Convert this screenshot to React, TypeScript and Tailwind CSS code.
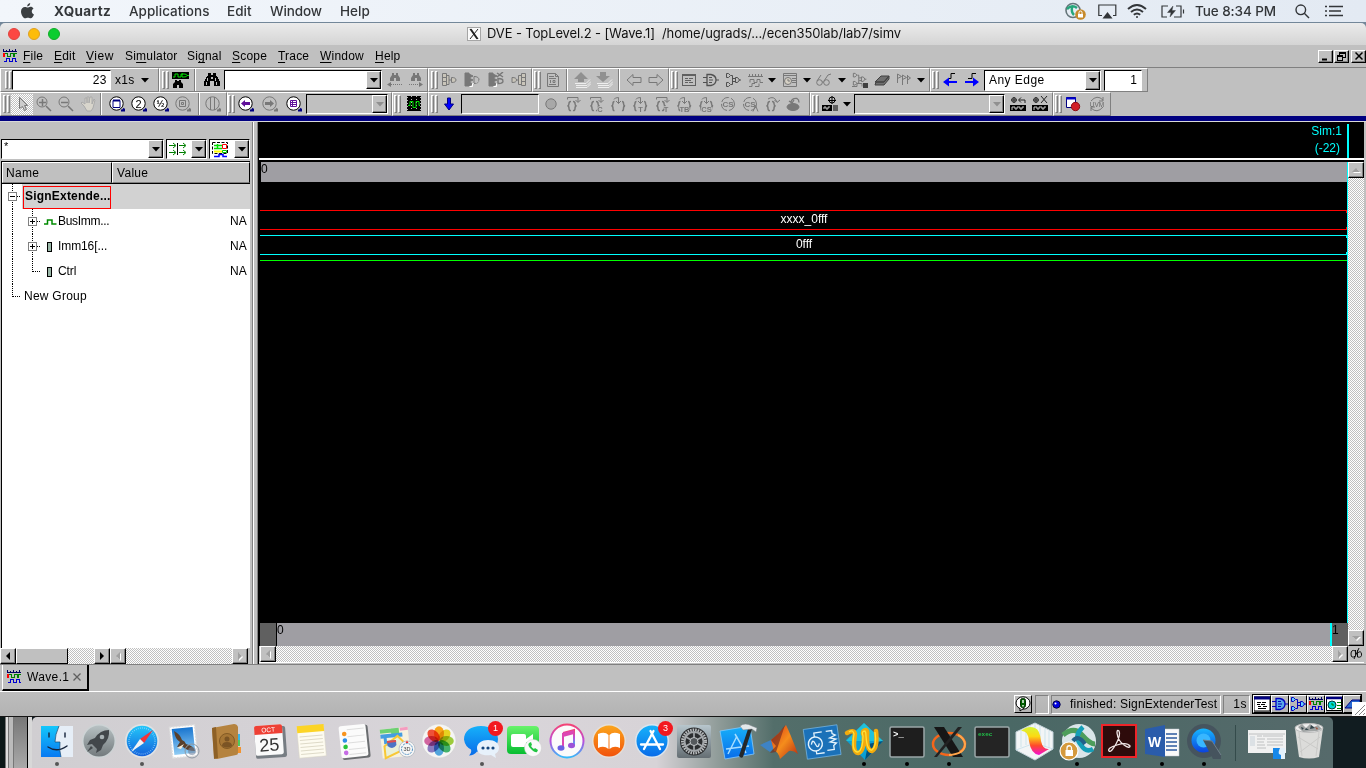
import React from "react";

type Kids = { children?: React.ReactNode; className?: string };

/* ---------- shared pieces ---------- */

const G = "#787878";

function Ico({ children, w = 16, h = 16, c = G, className = "" }: Kids & { w?: number; h?: number; c?: string }) {
  return (
    <svg width={w} height={h} viewBox={`0 0 ${w} ${h}`} fill="none" stroke={c} className={`shrink-0 ${className}`}>
      {children}
    </svg>
  );
}

function Handle({ className = "" }: Kids) {
  return (
    <div className={`flex h-[18px] w-[7px] shrink-0 gap-px ${className}`}>
      <div className="w-[3px] border border-t-white border-r-[#808080] border-b-[#808080] border-l-white" />
      <div className="w-[3px] border border-t-white border-r-[#808080] border-b-[#808080] border-l-white" />
    </div>
  );
}

function Group({ children, className = "" }: Kids) {
  return (
    <div className={`flex h-6 shrink-0 items-center border border-t-white border-r-[#808080] border-b-[#808080] border-l-white ${className}`}>
      {children}
    </div>
  );
}

function Cell({ children, className = "" }: Kids) {
  return <div className={`flex shrink-0 items-center justify-center ${className}`}>{children}</div>;
}

function Sep() {
  return <div className="h-[22px] w-0.5 shrink-0 border-r border-l border-r-white border-l-[#808080]" />;
}

function Tri({ c = "#000" }: { c?: string }) {
  return (
    <svg width="8" height="5" viewBox="0 0 8 5" className="shrink-0">
      <path d="M0 0h8L4 4.500z" fill={c} />
    </svg>
  );
}

function DropBtn({ off = false }: { off?: boolean }) {
  return (
    <div className="flex h-full w-[15px] shrink-0 items-center justify-center border border-t-white border-r-black border-b-black border-l-white bg-[#c0c0c0] shadow-[inset_-1px_-1px_#808080]">
      <Tri c={off ? "#909090" : "#000"} />
    </div>
  );
}

function Field({ children, className = "" }: Kids) {
  return (
    <div className={`flex shrink-0 items-center border-t-[1.5px] border-r border-b border-l-[1.5px] border-t-black border-r-white border-b-white border-l-black ${className}`}>
      {children}
    </div>
  );
}

const DITHER = "[background-image:repeating-conic-gradient(#fff_0_25%,#c0c0c0_0_50%)] [background-size:2px_2px]";

function ScrollBtn({ dir, off = true }: { dir: "l" | "r" | "u" | "d"; off?: boolean }) {
  const d = { l: "M10 4v8L6 8z", r: "M6 4v8l4-4z", u: "M4 10h8L8 6z", d: "M4 6h8l-4 4z" }[dir];
  return (
    <div className="h-4 w-4 shrink-0 border border-t-white border-r-black border-b-black border-l-white bg-[#c0c0c0] shadow-[inset_-1px_-1px_#808080]">
      <svg width="14" height="14" viewBox="1 1 14 14">
        {off && <path d={d} fill="#fff" transform="translate(1 1)" />}
        <path d={d} fill={off ? "#a0a0a0" : "#000"} />
      </svg>
    </div>
  );
}

/* ---------- small toolbar drawings ---------- */

function Lens({ children, off = false }: { children?: React.ReactNode; off?: boolean }) {
  return (
    <Ico c={off ? G : "#000"}>
      <circle cx="7.500" cy="7.500" r="6.700" fill={off ? "none" : "#fff"} />
      <path d="M12 14.500h4M14 12.500l2 2" stroke={off ? G : "#000080"} strokeWidth="2" />
      {children}
    </Ico>
  );
}

function Bino({ c = "#000" }: { c?: string }) {
  return (
    <g fill={c} stroke="none" shapeRendering="crispEdges">
      <path d="M4 1h3v2h2V1h3v3h1l3 6v4h-6v-5H6v5H0v-4l3-6h1z" />
      <path d="M3 6h1v3H3zM11 6h1v3h-1zM2 10h1v3H2zM12 10h1v3h-1zM7 5h2v2H7z" fill="#c0c0c0" />
    </g>
  );
}

function SmallBino({ right = false }: { right?: boolean }) {
  return (
    <Ico>
      <path d="M5 1h2v2h2V1h2v2l2 3v3H9V6H7v3H3V6l2-3z" fill={G} stroke="none" />
      {right ? <path d="M1 12.500h11" strokeDasharray="1 1" /> : <path d="M4 12.500h11" strokeDasharray="1 1" />}
      <path d={right ? "M11 10v5l4-2.500z" : "M4 10v5l-4-2.500z"} fill={G} stroke="none" />
    </Ico>
  );
}

function WaveIcon() {
  return (
    <svg width="14" height="14" viewBox="0 0 14 14" fill="none" shapeRendering="crispEdges" className="shrink-0">
      <path d="M0 2.500h14M.5 0v2M3.500 1v2M6.500 0v2M9.500 1v2M12.500 0v2" stroke="#000060" />
      <path d="M2 4.500h2.500v3h3v-3h3v3h1v-3H14" stroke="#008000" />
      <path d="M0 4h2v4H0z" fill="#f00" />
      <path d="M1 12.500h2.500v-3h3v3h3v-3h3v3H14" stroke="#0000d0" />
    </svg>
  );
}

function Brace({ kind, label }: { kind: number; label?: string }) {
  return (
    <Ico w={17} h={17}>
      {kind === 0 && <path d="M2.500 3.500V1.500h10.500v4.500M10.500 4l2.500 2.500L15.500 4" />}
      {kind === 1 && <path d="M4 3.500Q4.500 1.500 8.500 1.500v6M6 5l2.500 2.500L11 5" />}
      {kind === 2 && <path d="M4 3q6-4 9 3M10.500 4l2.500 2.500L16 4" />}
      <path
        d={kind === 1 ? "M4.500 5.500Q3 5.500 3 7.500T1.500 10Q3 10 3 12.500T4.500 14.500M12 5.500q1.500 0 1.500 2T15 10q-1.500 0-1.500 2.500T12 14.500" : "M6 5.500Q4 5.500 4 7.500T2.500 10Q4 10 4 12.500T6 14.500M8 5.500q2 0 2 2T11.500 10Q10 10 10 12.500T8 14.500"}
        strokeWidth="1.500"
      />
      {label && (
        <text x={kind === 0 ? 12 : 8.5} y="16" fontSize="7.500" fontFamily="Liberation Sans, sans-serif" fill={G} stroke="#c0c0c0" strokeWidth="1.500" paintOrder="stroke" fontWeight="bold" textAnchor="middle">
          {label}
        </text>
      )}
    </Ico>
  );
}

function Gate({ c = "#505050", fill = "none" }: { c?: string; fill?: string }) {
  return (
    <g stroke={c}>
      <path d="M4 2.500h4q5 1 5 5.500t-5 5.500H4z" fill={fill} strokeWidth="1.300" />
      <path d="M0 5.500h4M0 10.500h4M13 8h3M6 5.500h3M6 8h4M6 10.500h3" />
    </g>
  );
}

function Tree({ c = "#505050", fill = "none" }: { c?: string; fill?: string }) {
  return (
    <g stroke={c}>
      <path d="M1.500 1.500h2l2 2-2 2h-2zM1.500 10.500h2l2 2-2 2h-2zM10.500 5.500h2l2 2.500-2 2.500h-2z" fill={fill} />
      <path d="M6 3.500h1.500v9H6M8 6.500h2.500M8 9.500h2.500M14 8h2" />
    </g>
  );
}

function Doc({ c = "#606060" }: { c?: string }) {
  return (
    <g stroke={c} shapeRendering="crispEdges">
      <path d="M1.500 2.500h13v11h-13z" />
      <path d="M1 3.500h14M4 6.500h3M8 6.500h4M4 8.500h6M4 10.500h3M8 10.500h4" />
    </g>
  );
}

/* ---------- menu bar / title ---------- */

function MacBar() {
  return (
    <div className="flex h-[22px] items-center bg-gradient-to-r from-[#f2f6fb] to-[#e3eaf3] text-[13.5px] leading-[22px] font-medium text-[#333639]">
      <div className="w-[54px] pl-[21px]">
        <svg width="13" height="16" viewBox="0 0 13 16" fill="#3b3f42">
          <path d="M9.200 0c.1 2-1.200 3.300-3 3.400C6 1.700 7.400.3 9.200 0zM6.600 4.600c.7 0 1.600-.8 2.900-.8 1.200 0 2.300.6 3 1.600-2.500 1.600-2.100 5 .5 6-.6 1.700-1.900 3.900-3.300 3.900-1 0-1.600-.6-2.800-.6-1.300 0-1.800.6-2.800.6C2.600 15.300 0 12 0 8.400 0 5.500 1.900 3.900 3.900 3.900c1.200 0 2.100.7 2.700.7z" />
        </svg>
      </div>
      <span className="w-[75px] font-bold tracking-[0.4px]">XQuartz</span>
      <span className="w-[98px] tracking-[0.02px]">Applications</span>
      <span className="w-[43px]">Edit</span>
      <span className="w-[70px] tracking-[-0.1px]">Window</span>
      <span>Help</span>
      <div className="ml-auto flex items-center">
        <div className="w-[33px]">
          <svg width="22" height="18" viewBox="0 0 22 18" fill="none">
            <circle cx="8" cy="8.500" r="7" stroke="#65757a" strokeWidth="1.600" />
            <path d="M2 7q5-5 10-1M7 5q-1 5 2 8" stroke="#25a67b" strokeWidth="2.500" />
            <circle cx="15.500" cy="12.500" r="5.300" fill="#c68a2b" />
            <path d="M13 12h5v3.500h-5z" fill="#fff" />
            <path d="M14 12v-1.500a1.500 1.500 0 013 0V12" stroke="#fff" />
          </svg>
        </div>
        <div className="w-[29px]">
          <svg width="19" height="15" viewBox="0 0 19 15">
            <path d="M4 11.500H.8V1h17v10.500H15" fill="none" stroke="#333639" strokeWidth="1.200" />
            <path d="M9.500 8l5 6.500h-10z" fill="#333639" />
          </svg>
        </div>
        <div className="w-[34px]">
          <svg width="20" height="15" viewBox="0 0 20 15" fill="none" stroke="#333639" strokeWidth="1.900">
            <path d="M1 5q9-8 18 0M4 8q6-5.200 12 0M6.800 10.800q3.200-2.600 6.400 0" />
            <circle cx="10" cy="13" r="1" fill="#333639" stroke="none" />
          </svg>
        </div>
        <div className="w-[34px]">
          <svg width="24" height="13" viewBox="0 0 24 13" fill="none" stroke="#333639" strokeWidth="1.200">
            <path d="M7 1H1v11h5M15 1h5v11h-7" />
            <path d="M12 1L6.500 7.500H10L9 12l5.500-6.500H11z" fill="#333639" strokeWidth=".4" />
            <path d="M22.500 4.500v4" />
          </svg>
        </div>
        <span className="w-[100px] whitespace-nowrap tracking-[-0.08px]">Tue 8:34 PM</span>
        <div className="w-[30px]">
          <svg width="15" height="15" viewBox="0 0 15 15" fill="none" stroke="#333639" strokeWidth="1.400">
            <circle cx="5.800" cy="5.800" r="4.800" />
            <path d="M9.300 9.300L14 14" />
          </svg>
        </div>
        <div className="w-[41px]">
          <svg width="19" height="12" viewBox="0 0 19 12" stroke="#333639" strokeWidth="1.700">
            <path d="M0 1.500h2M4 1.500h14M0 6h2M4 6h12M0 10.500h2M4 10.500h14" />
          </svg>
        </div>
      </div>
    </div>
  );
}

function TitleBar() {
  return (
    <div className="bg-[#738799] pt-px">
      <div className="flex h-[22px] items-center rounded-t-[5px] bg-gradient-to-b from-[#ebebeb] to-[#d4d4d4] text-[13px] text-[#111]">
        <div className="flex w-[467px] gap-2 pl-2">
          <div className="h-3 w-3 rounded-full border border-[#e0443e] bg-[#fc4743]" />
          <div className="h-3 w-3 rounded-full border border-[#dfa023] bg-[#fdbc0a]" />
          <div className="h-3 w-3 rounded-full border border-[#12ac28] bg-[#0bcd30]" />
        </div>
        <svg width="14" height="14" viewBox="0 0 14 14" className="mr-1.5">
          <rect x=".5" y=".5" width="13" height="13" fill="#fafafa" stroke="#a5a5a5" />
          <path d="M3 2l7 10M4 2l7 10" stroke="#222" strokeWidth="1.200" />
          <path d="M11 2L3 12" stroke="#222" />
        </svg>
        <span className="whitespace-pre tracking-[-0.11px]">DVE - TopLevel.2 - [Wave.1]  /home/ugrads/.../ecen350lab/lab7/simv</span>
      </div>
    </div>
  );
}

function WinBtn({ children }: Kids) {
  return (
    <div className="flex h-[13px] w-[15px] items-center justify-center border border-t-white border-r-black border-b-black border-l-white bg-[#c0c0c0] shadow-[inset_-1px_-1px_#808080]">
      {children}
    </div>
  );
}

function AppMenu() {
  const U = ({ children }: Kids) => <span className="underline decoration-1 underline-offset-2">{children}</span>;
  return (
    <div className="flex h-[22px] items-center text-[12px] tracking-[0.2px]">
      <div className="w-[23px] pl-[3px]">
        <WaveIcon />
      </div>
      <span className="w-[31px]"><U>F</U>ile</span>
      <span className="w-8"><U>E</U>dit</span>
      <span className="w-[39px] tracking-[0.5px]"><U>V</U>iew</span>
      <span className="w-[62px]">Si<U>m</U>ulator</span>
      <span className="w-[45px]">Si<U>g</U>nal</span>
      <span className="w-[46px]"><U>S</U>cope</span>
      <span className="w-[42px]"><U>T</U>race</span>
      <span className="w-[55px]"><U>W</U>indow</span>
      <span><U>H</U>elp</span>
      <div className="ml-auto flex">
        <WinBtn><svg width="9" height="9"><path d="M1 7.500h5" stroke="#000" strokeWidth="2" /></svg></WinBtn>
        <div className="mr-0.5 ml-px">
          <WinBtn>
            <svg width="9" height="9" fill="none" stroke="#000" shapeRendering="crispEdges"><path d="M.5 3.500h5v5h-5zM2.500 3V.5h6v5H6M2 1.500h6M0 4.500h6" /></svg>
          </WinBtn>
        </div>
        <WinBtn><svg width="8" height="8"><path d="M.5.5l7 7M7.500.5l-7 7" stroke="#000" strokeWidth="1.500" /></svg></WinBtn>
      </div>
    </div>
  );
}

/* ---------- toolbars ---------- */

function ToolbarOne() {
  return (
    <div className="flex h-6 text-[12px]">
      <Group className="w-[159px]">
        <Handle className="ml-1" />
        <Field className="h-5 w-[99px] justify-end bg-white pr-[3px] tracking-[0.5px]">23</Field>
        <span className="ml-1 w-[26px] tracking-[0.3px]">x1s</span>
        <Tri />
      </Group>
      <Group className="w-[269px]">
        <Handle className="ml-0.5" />
        <Cell className="w-[22px]">
          <Ico w={17}>
            <path d="M0 0h17v7H0z" fill="#000" stroke="none" />
            <path d="M1 5h2V2h3v3h3V2h2M10 2h2q3 0 3 1.500T12 5h-2zM15 3.500h2" stroke="#00e000" />
            <path d="M3 8h2v1h2V8h2v2l2 2v4H7v-3H5v3H1v-4l2-2z" fill="#000" stroke="none" />
          </Ico>
        </Cell>
        <Cell className="w-2"><Sep /></Cell>
        <Cell className="w-[25px]"><Ico><Bino /></Ico></Cell>
        <Field className="h-5 w-[158px] justify-end bg-white"><DropBtn /></Field>
        <Cell className="ml-0.5 w-[21px]"><SmallBino /></Cell>
        <Cell className="w-[21px]"><SmallBino right /></Cell>
      </Group>
      <Group className="w-[104px]">
        <Handle className="ml-0.5" />
        <Cell className="w-[22px]"><Ico><path d="M1.500 1.500h4v12h-4zM1 5.500h4M1 9.500h4" fill="#c9c5ba" /><path d="M6 3.500h2v9H6M8 8h2M10.500 5.500q4.500 0 4.500 2.500t-4.500 2.500z" fill="#c9c5ba" /></Ico></Cell>
        <Cell className="w-6"><Ico><path d="M1 1h4v13H1zM5 2l4 2-4 2zM5 6l4 2-4 2zM5 10l4 2-4 2z" fill={G} /><path d="M5.500 14.500h3v-3h3q3-1 4-3" stroke="#fff" /><path d="M10 4.500q5 0 5 3.500t-5 3.500z" /></Ico></Cell>
        <Cell className="w-[23px]"><Ico><path d="M1 1h4v13H1zM5 2l4 2-4 2zM5 6l4 2-4 2zM5 10l4 2-4 2z" fill={G} /><path d="M5.500 14.500h3v-3h3q3-1 4-3" stroke="#fff" /><path d="M9 1l6 4M15 0L9 5M10 6.500q5 0 5 2.500t-5 2.500z" strokeWidth="1.500" /></Ico></Cell>
        <Cell className="w-[23px]"><Ico><path d="M10.500 1.500h4v12h-4zM10 5.500h4M10 9.500h4" fill="#c9c5ba" /><path d="M10 3.500H7.500v9H10M7.500 8H5.500M1 5.500q4.500 0 4.500 2.500T1 10.500z" fill="#c9c5ba" /></Ico></Cell>
      </Group>
      <Group className="w-[137px]">
        <Handle className="ml-px" />
        <Cell className="w-[23px]"><Ico><path d="M2.500 1.500h8l3 3v10h-11zM10.500 1.500v3h3M4 4.500h5M4 6.500h7M4 12.500h7M5.500 8v3M8 8.500h2v2H8z" /></Ico></Cell>
        <Cell className="w-1.5"><Sep /></Cell>
        <Cell className="w-6"><Ico w={17}><path d="M1 11.500h11l4-4M2 13.500h11l4-4M2 15.500h11l4-4" stroke="#eee" /><path d="M7 0l7 7h-4v3H4V7H0z" fill="#909090" stroke="none" /></Ico></Cell>
        <Cell className="w-5"><Ico w={17}><path d="M1 11.500h11l4-4M2 13.500h11l4-4M2 15.500h11l4-4" stroke="#eee" /><path d="M4 0h6v4h4l-7 6-7-6h4z" fill="#909090" stroke="none" /></Ico></Cell>
        <Cell className="w-2.5"><Sep /></Cell>
        <Cell className="w-5"><Ico><path d="M1 8l6-5.500v3h8v5H7v3z" /></Ico></Cell>
        <Cell className="w-6"><Ico><path d="M15 8L9 2.500v3H1v5h8v3z" /></Ico></Cell>
      </Group>
      <Group className="w-[261px]">
        <Handle className="ml-px" />
        <Cell className="w-[22px]"><Ico><Doc /></Ico></Cell>
        <Cell className="w-[21px]"><Ico><Gate /></Ico></Cell>
        <Cell className="w-6"><Ico><Tree /></Ico></Cell>
        <Cell className="w-[21px]"><Ico><path d="M0 4.500h15M1.500 2v2M4.500 2v2M7.500 2v2M10.500 2v2M13.500 2v2M2 10.500V7.500h4v3h3v-3h3v3h3M1 14.500h3v-3h3M7 14.500h4v-3" /></Ico></Cell>
        <Cell className="w-3"><Tri /></Cell>
        <Cell className="w-6"><Ico><path d="M1.500 1.500h13v13h-13zM1 3.500h14M10 6.500h4M10 8.500h4M10 10.500h4" /><circle cx="6" cy="9" r="3.500" fill="#d5d0c4" /><path d="M6 7v2h2" /></Ico></Cell>
        <Cell className="w-[9px]"><Tri /></Cell>
        <Cell className="w-[26px]"><Ico><circle cx="3.500" cy="10.500" r="2.800" /><circle cx="10.500" cy="10.500" r="2.800" /><path d="M1 9l4-6M8 9l4-6 3-1M6 10h2" /></Ico></Cell>
        <Cell className="w-2.5"><Tri /></Cell>
        <Cell className="w-[26px]"><Ico><g transform="scale(.9)"><Tree c="#707070" /></g><path d="M0 14.500h5v-3h5v3" /><path d="M11 11h5v5h-5z" fill="#404040" stroke="none" /></Ico></Cell>
        <Cell className="w-[18px]"><Ico><path d="M1 10l6-6h8l-5 6zM1 13l1-3h8l5-6v3l-5 6z" fill="#707070" stroke="#404040" /></Ico></Cell>
        <Cell className="w-[26px]"><Ico><path d="M1.500 2v9M1.500 2l4 2.500-4 2M6.500 3v10M6.500 3l4 2.500-4 2M11.500 3v9M11.500 4l3 2-3 2" /></Ico></Cell>
        <Cell className="w-2"><Tri /></Cell>
      </Group>
      <Group className="w-[218px]">
        <Handle className="ml-px" />
        <Cell className="w-[22px]"><Ico><path d="M6 6.500h3v-5h4" stroke="#000" /><path d="M1 10l6-4.500V9h8v2H7v3.500z" fill="#00f" stroke="none" /></Ico></Cell>
        <Cell className="w-[22px]"><Ico><path d="M4 6.500h4v-5h4" stroke="#000" /><path d="M15 10L9 5.500V9H1v2h8v3.500z" fill="#00f" stroke="none" /></Ico></Cell>
        <Field className="ml-px h-[21px] w-[117px] justify-between bg-white pl-1 tracking-[0.45px]">Any Edge<DropBtn /></Field>
        <Field className="ml-[3px] h-[21px] w-[38px] justify-end bg-white pr-1">1</Field>
      </Group>
    </div>
  );
}

function ToolbarTwo() {
  return (
    <div className="flex h-6 text-[12px]">
      <Group className="w-[227px]">
        <Handle className="ml-0.5" />
        <div className={`ml-px flex h-[21px] w-[22px] shrink-0 items-center justify-center ${DITHER}`}>
          <Ico><path d="M5.500 1.500v11l3-2 2 4 2-1-2-4h3z" fill="#ccc" /></Ico>
        </div>
        <Cell className="w-[21px]"><Ico><circle cx="6" cy="6" r="5" /><path d="M3 6.500h7M6.500 3v7M10 10l5 5" strokeWidth="1.500" /></Ico></Cell>
        <Cell className="w-[23px]"><Ico><circle cx="6" cy="6" r="5" /><path d="M3 6.500h7M10 10l5 5" strokeWidth="1.500" /></Ico></Cell>
        <Cell className="w-[22px]"><Ico w={17}><path d="M4 10L1 7l1-1 3 2V2h2v5V1h2v6l1-6h2v7l2-5 1 1-2 8-2 3H7z" fill="#d8d5cc" stroke="#aaa" /></Ico></Cell>
        <Cell className="w-1"><Sep /></Cell>
        <Cell className="ml-[3px] w-[22px]"><Lens><path d="M4 4.500h7v7H4z" stroke="#000080" /><path d="M4 4.500h7" stroke="#000080" strokeWidth="2" /></Lens></Cell>
        <Cell className="w-[22px]"><Lens><text x="7.500" y="11.500" fontSize="11" fill="#000" stroke="none" textAnchor="middle">2</text></Lens></Cell>
        <Cell className="w-[22px]"><Lens><text x="7.500" y="10.500" fontSize="9" fill="#000" stroke="#000" strokeWidth=".2" textAnchor="middle">½</text></Lens></Cell>
        <Cell className="w-[22px]"><Lens off><path d="M4.500 4.500h6v6h-6zM6.500 6.500h2v2h-2z" /></Lens></Cell>
        <Cell className="w-2.5"><Sep /></Cell>
        <Cell className="w-[18px]"><Lens off><path d="M5.500 1v13M9.500 1v13" /></Lens></Cell>
      </Group>
      <Group className="w-[165px]">
        <Handle />
        <Cell className="w-[22px]"><Lens><path d="M3 7.500l4-3.500v2h5v3H7v2z" fill="#60109a" stroke="none" /></Lens></Cell>
        <Cell className="w-[26px]"><Lens off><path d="M12 7.500L8 4v2H3v3h5v2z" fill={G} stroke="none" /></Lens></Cell>
        <Cell className="w-[21px]"><Lens><path d="M4.500 4.500h6v6h-6zM4 6.500h7M4 8.500h7M6.500 4v7" stroke="#60109a" /></Lens></Cell>
        <Field className="ml-0.5 h-5 w-[82px] justify-end"><DropBtn off /></Field>
      </Group>
      <Group className="w-9">
        <Handle className="ml-px" />
        <Cell className="w-[26px]">
          <Ico><path d="M1 0h14v15H1z" fill="#000" stroke="none" /><path d="M1.500 1v13M5.500 0v15M10.500 0v15M14.500 1v13" stroke="#b8b8b8" strokeDasharray="1 2" /><path d="M2 9.500h2v-4h3v6h3v-6h3v4h1" stroke="#00e000" /></Ico>
        </Cell>
      </Group>
      <Group className="w-[382px]">
        <Handle className="ml-0.5" />
        <Cell className="w-[21px]"><Ico><path d="M6.500 2h3v6h3L8 14 3.500 8h3z" fill="#00f" stroke="#000080" /></Ico></Cell>
        <Field className="ml-0.5 h-5 w-[78px]" />
        <Cell className="w-[23px]"><Ico><circle cx="8" cy="8" r="5.200" fill="#a8a8a8" /></Ico></Cell>
        <Cell className="w-[23px]"><Brace kind={0} /></Cell>
        <Cell className="w-[22px]"><Brace kind={0} label="C" /></Cell>
        <Cell className="w-[22px]"><Brace kind={1} /></Cell>
        <Cell className="w-[22px]"><Brace kind={1} label="T" /></Cell>
        <Cell className="w-[22px]"><Brace kind={0} label="T" /></Cell>
        <Cell className="w-[22px]"><Brace kind={1} label="TB" /></Cell>
        <Cell className="w-[22px]"><Brace kind={1} label="CS" /></Cell>
        <Cell className="w-[22px]"><Ico w={17}><circle cx="8" cy="8" r="6.500" strokeDasharray="9 2" /><text x="8" y="11" fontSize="8" fontWeight="bold" fill={G} stroke="none" textAnchor="middle">CS</text></Ico></Cell>
        <Cell className="w-[22px]"><Ico w={17}><circle cx="8" cy="8" r="6.500" strokeDasharray="9 2" /><text x="8" y="11" fontSize="8" fontWeight="bold" fill={G} stroke="none" textAnchor="middle">CS</text><path d="M11 15.500l2.500-6 2.500 6" /></Ico></Cell>
        <Cell className="w-[22px]"><Brace kind={2} /></Cell>
        <Cell className="w-[22px]"><Ico><ellipse cx="7" cy="11" rx="6" ry="3.500" fill={G} /><path d="M5 6q1-4 6-3.500 2 1 2 4M3 5l3 2 2-3" strokeWidth="1.300" /></Ico></Cell>
      </Group>
      <Group className="w-[243px]">
        <Handle className="ml-px" />
        <Cell className="w-[22px]"><Ico><circle cx="10" cy="4" r="3" stroke="#000" /><path d="M6 4.500h8M10 0v8" stroke="#000" /><path d="M0 9h10v6H0z" fill="#000" stroke="none" /><path d="M2 13v-2h2v2h2v-2h2" stroke="#ccc" /><path d="M11 9h5v6h-5z" fill="#606060" stroke="none" /></Ico></Cell>
        <Cell className="w-[11px]"><Tri /></Cell>
        <Field className="ml-0.5 h-5 w-[151px] justify-end"><DropBtn off /></Field>
        <Cell className="w-[26px]"><Ico><circle cx="4" cy="4" r="2.300" stroke="#222" /><path d="M1 4h6M4 1v6M9 4h6v3M11 1.500L8.500 4l2.500 2.500" stroke="#222" /><path d="M0 9h16v6H0z" fill="#000" stroke="none" /><path d="M2 14v-3h3v2h2v-2h3v2h2v-2h2" stroke="#ccc" /></Ico></Cell>
        <Cell className="w-[18px]"><Ico><circle cx="4" cy="4" r="2.300" stroke="#222" /><path d="M1 4h6M4 1v6M9 0l6 7M15 0L9 7" stroke="#222" /><path d="M0 9h16v6H0z" fill="#000" stroke="none" /><path d="M2 14v-3h3v2h2v-2h3v2h2v-2h2" stroke="#ccc" /></Ico></Cell>
      </Group>
      <Group className="w-[58px]">
        <Handle className="ml-px" />
        <Cell className="w-[22px]"><Ico><path d="M1.500 1.500h9v10h-9z" fill="#fff" stroke="#000080" /><path d="M1 2.500h10" stroke="#0000d0" strokeWidth="2" /><circle cx="10.500" cy="10.500" r="4.200" fill="#d11f26" stroke="#8d0e14" /></Ico></Cell>
        <Cell className="w-[26px]"><Ico><path d="M2 5q6-7 12-1M14 1v4h-4M14 11q-6 7-12 1M2 15v-4h4" /><text x="8" y="10.500" fontSize="6.500" fill="#666" stroke="none" textAnchor="middle">UVM</text></Ico></Cell>
      </Group>
    </div>
  );
}

/* ---------- left panel ---------- */

function Box({ x, plus }: { x: number; plus?: boolean }) {
  return (
    <g fill="none" strokeDasharray="none">
      <rect x={x - 4} y="8.500" width="8" height="8" fill="#fff" stroke="#808080" />
      <path d={`M${x - 2.5} 12.500h5`} stroke="#000" />
      {plus && <path d={`M${x} 10v5`} stroke="#000" />}
    </g>
  );
}

function SignalRow({ name, wave, last, plus }: { name: string; wave?: boolean; last?: boolean; plus?: boolean }) {
  return (
    <div className="flex h-[25px] items-center">
      <svg width="40" height="25" className="shrink-0" stroke="#000" strokeDasharray="1 1" shapeRendering="crispEdges">
        <path d="M10.500 0v25" />
        <path d={last ? "M30.500 0v13" : "M30.500 0v25"} />
        <path d="M31 12.500h8" />
        {plus && <Box x={30.5} plus />}
      </svg>
      <div className="w-4 pl-0.5">
        {wave ? (
          <svg width="13" height="8"><path d="M0 6h3.500V2h4.500v4h4.500" fill="none" stroke="#008a00" strokeWidth="1.500" /></svg>
        ) : (
          <div className="ml-[3px] h-2.5 w-[5px] border border-black bg-[#9ab8a8]" />
        )}
      </div>
      <span className={wave ? "pb-px tracking-[-0.3px]" : "pb-px tracking-[-0.1px]"}>{name}</span>
      <span className="mr-[3px] ml-auto pb-px tracking-[0.2px]">NA</span>
    </div>
  );
}

function LeftPanel() {
  return (
    <div className="flex w-[252px] shrink-0 flex-col text-[12px]">
      <div className="h-[17px]" />
      <div className="flex h-[21px] gap-0.5 pl-px">
        <Field className="h-5 w-[163px] justify-between bg-white pl-0.5"><span className="-mt-1.5 text-[11px]">*</span><DropBtn /></Field>
        <Field className="h-5 w-[41px] justify-between bg-white">
          <Ico w={22}><path d="M2 4.500h6M2 11.500h6M12 4.500h6M12 11.500h6M6 2l3 2.500L6 7M6 9l3 2.500L6 14M16 2l3 2.500L16 7M16 9l3 2.500-3 2.500" stroke="#008000" /><path d="M10.500 2v12" stroke="#000" /></Ico>
          <DropBtn />
        </Field>
        <Field className="h-5 w-[41px] justify-between bg-white">
          <Ico w={20} h={18}><path d="M2.500 2.500h15v11h-15z" stroke="#000" strokeDasharray="3 1.500" /><path d="M4 5.500h8M4 8.500h8M7.500 4v5" stroke="#00e000" strokeWidth="1.500" /><path d="M12.500 4.500h4v4h-4z" stroke="#f00" /><path d="M4 11.500h9" stroke="#ff0" strokeWidth="2" /><path d="M12.500 10.500h4v2h-4z" stroke="#0c0" /><path d="M4 16.500h5v-2h4v2h4" stroke="#00f" strokeWidth="1.500" /></Ico>
          <DropBtn />
        </Field>
      </div>
      <div className="mt-px ml-px flex h-[487px] w-[249px] flex-col border-t border-l border-t-black border-l-black bg-white">
        <div className="flex h-[22px] border-b border-black bg-[#c0c0c0] leading-[20px] tracking-[0.3px]">
          <div className="w-[110px] border border-t-white border-r-black border-b-[#808080] border-l-white pl-[3px]">Name</div>
          <div className="w-[138px] border border-t-white border-r-black border-b-[#808080] border-l-white pl-1">Value</div>
        </div>
        <div className="flex h-[25px] items-center">
          <svg width="20" height="25" className="shrink-0" stroke="#000" strokeDasharray="1 1" shapeRendering="crispEdges">
            <path d="M10.500 0v25M15 12.500h4" />
            <Box x={10.5} />
          </svg>
          <div className="flex h-full flex-1 items-center bg-[#d2d2d2] pl-px">
            <div className="mt-px flex h-[23px] w-[88px] items-center border border-[#ff0000] pb-0.5 pl-px text-[12px] font-bold whitespace-nowrap tracking-[0.2px]">SignExtende...</div>
          </div>
        </div>
        <SignalRow name="BusImm..." wave plus />
        <SignalRow name="Imm16[..." plus />
        <SignalRow name="Ctrl" last />
        <div className="flex h-[25px] items-center">
          <svg width="22" height="25" className="shrink-0" stroke="#000" strokeDasharray="1 1" shapeRendering="crispEdges">
            <path d="M10.500 0v13M11 12.500h8" />
          </svg>
          <span className="pb-px tracking-[0.25px]">New Group</span>
        </div>
      </div>
      <div className="flex h-4">
        <ScrollBtn dir="l" off={false} />
        <div className="w-[52px] border border-t-white border-r-black border-b-black border-l-white bg-[#c0c0c0]" />
        <div className={`flex-1 ${DITHER}`} />
        <ScrollBtn dir="r" off={false} />
        <ScrollBtn dir="l" />
        <div className={`w-[106px] ${DITHER}`} />
        <ScrollBtn dir="r" />
        <div className="w-1" />
      </div>
    </div>
  );
}

/* ---------- wave panel ---------- */

function Bus({ label, className = "", tick }: { label: string; className?: string; tick: string }) {
  return (
    <div className={`flex h-5 border-y text-[12px] text-white ${className}`}>
      <div className="flex flex-1 items-center justify-center pb-0.5 pl-0.5">{label}</div>
      <div className="flex w-px flex-col justify-between">
        <div className={`h-0.5 ${tick}`} />
        <div className={`h-0.5 ${tick}`} />
      </div>
    </div>
  );
}

function WavePanel() {
  return (
    <div className="flex min-w-0 flex-1 flex-col pr-0.5">
      <div className="flex h-9 justify-end bg-black pt-0.5 text-[12px] text-[#00ffff]">
        <div className="mr-[5px] text-right leading-[17px]">
          <div className="-mt-px">Sim:1</div>
          <div className="pr-0.5">(-22)</div>
        </div>
        <div className="mr-[15px] h-[34px] w-0.5 bg-[#00ffff]" />
      </div>
      <div className="h-1 border-t-2 border-b-2 border-t-white border-b-black bg-[#c0c0c0]" />
      <div className="flex h-[484px]">
        <div className="flex w-[1089px] flex-col border-l border-black bg-black text-[12px]">
          <div className="flex h-5 border-r border-r-[#00ffff] bg-[#9f9ea3] leading-[15px]">
            <div className="w-px bg-black" />
            <span>0</span>
          </div>
          <div className="flex h-[441px] flex-col border-r border-[#00ffff] pt-7">
            <Bus label="xxxx_0fff" className="border-[#ff0000]" tick="bg-[#ff0000]" />
            <Bus label="0fff" className="mt-[5px] border-[#00ffff]" tick="bg-[#00ffff]" />
            <div className="mt-[5px] h-px bg-[#00ff00]" />
          </div>
          <div className="flex h-[23px] bg-[#9f9ea3] leading-[15px]">
            <div className="w-4 bg-[#606060]" />
            <div className="flex-1 border-l border-black">0</div>
            <div className="w-[18px] border-l-2 border-[#00ffff] bg-[#606060]">1</div>
          </div>
        </div>
        <div className="flex w-4 flex-col">
          <ScrollBtn dir="u" />
          <div className={`flex-1 ${DITHER}`} />
          <ScrollBtn dir="d" />
        </div>
      </div>
      <div className="flex h-[17px] border-b border-white pl-px">
        <ScrollBtn dir="l" />
        <div className={`flex-1 ${DITHER}`} />
        <ScrollBtn dir="r" />
        <Ico><path d="M7.500 5q-4.500-2-4.500 3t4.500 2V4M6 13l5-11M9.500 4v7q4.500 1 4-3t-4-1" stroke="#111" /></Ico>
      </div>
    </div>
  );
}

/* ---------- status bar ---------- */

function StatBtn({ children, className = "" }: Kids) {
  return (
    <div className={`flex h-[18px] w-[18px] shrink-0 items-center justify-center border border-t-white border-r-black border-b-black border-l-white ${className}`}>
      {children}
    </div>
  );
}

const WELL = "flex h-[19px] items-center border border-t-[#808080] border-r-white border-b-white border-l-[#808080]";

function StatusBar() {
  return (
    <div className="flex h-[25px] items-center justify-end border-t border-white bg-gradient-to-b from-[#bdbdbd] to-[#b3b3b3] pr-[5px] text-[12px]">
      <StatBtn>
        <Ico><ellipse cx="8" cy="7" rx="7" ry="6.200" fill="#fff" stroke="#000" /><path d="M5 12v3l4-3" fill="#fff" stroke="#000" /><rect x="5.500" y="2.500" width="5" height="9" rx="2" fill="#006000" stroke="#003000" /><path d="M8 4v3M8 9v1.500" stroke="#fff" strokeWidth="1.400" /></Ico>
      </StatBtn>
      <div className={`ml-[3px] w-3.5 ${WELL}`} />
      <div className={`ml-0.5 w-[170px] ${WELL}`}>
        <svg width="18" height="9" className="shrink-0"><circle cx="4.500" cy="4.500" r="3.700" fill="#0000e0" stroke="#000040" /><circle cx="3.500" cy="3.500" r="1" fill="#fff" /></svg>
        <span className="whitespace-nowrap tracking-[0.2px]">finished: SignExtenderTest</span>
      </div>
      <div className={`ml-0.5 w-[27px] justify-end pr-0.5 tracking-[0.6px] ${WELL}`}>1s</div>
      <div className="ml-0.5 flex border border-black">
        <StatBtn><Ico><path d="M0 1h16v14H0z" fill="#fff" stroke="#000" /><path d="M0 2h16" stroke="#000080" strokeWidth="3" /><path d="M3 6.500h4M8 6.500h4M3 8.500h3M7 8.500h4M4 10.500h3M9 10.500h4M4 12.500h8" stroke="#000" /></Ico></StatBtn>
        <StatBtn><Ico><Gate c="#0000c0" fill="#5aa8e8" /></Ico></StatBtn>
        <StatBtn><Ico><Tree c="#0000c0" fill="#6cf" /></Ico></StatBtn>
        <StatBtn><WaveIcon /></StatBtn>
        <StatBtn><Ico><path d="M.5 1.500h15v13H.5z" fill="#fff" stroke="#000" /><path d="M0 2h16" stroke="#000080" strokeWidth="2.500" /><circle cx="6" cy="9" r="4" fill="#00d8d8" stroke="#003c3c" /><path d="M6 7v2h2M11 6.500h4M11 9.500h4M11 12.500h4" stroke="#008000" /></Ico></StatBtn>
        <StatBtn><Ico><path d="M1 12L8 4h8v8z" fill="#2868d0" stroke="#000080" /></Ico></StatBtn>
      </div>
      <svg width="14" height="14" className="relative -mr-[5px] -ml-[10px] shrink-0 self-end" stroke="#888" strokeWidth="1">
        <rect width="14" height="14" fill="#fff" stroke="none" />
        <path d="M3 13L13 3M7 13l6-6M11 13l2-2" />
      </svg>
    </div>
  );
}

/* ---------- dock ---------- */

const PETALS = ["#f8a51b", "#e7d321", "#9ccb3b", "#44b26b", "#52a5dc", "#8b7cc0", "#d1649f", "#ee5138"];

function DockArt({ id }: { id: string }) {
  switch (id) {
    case "finder":
      return (<g><path d="M2 3h32v31H2z" fill="#e6eef7" /><path d="M2 3h18q-4 9-4 16h5q-1 8 1 15H2z" fill="url(#fb)" /><path d="M10 10v4M26 10v4M9 24q9 6 19-1" stroke="#15233a" strokeWidth="1.400" fill="none" strokeLinecap="round" /><path d="M20 3q-4 9-4 16h5q-1 8 1 15" stroke="#15466e" fill="none" strokeWidth=".7" /></g>);
    case "launchpad":
      return (<g><circle cx="18" cy="18" r="17" fill="#cdd3d5" /><circle cx="18" cy="18" r="15.500" fill="url(#lp)" /><path d="M28 7q-9 0-14 8l-5 2-3 5 5-1 5 5-1 4 5-3 2-5q7-6 6-15z" fill="#42474b" /><circle cx="21" cy="14" r="2.300" fill="#a8b1b4" /><path d="M10 23l-4 6 6-4z" fill="#42474b" /></g>);
    case "safari":
      return (<g><circle cx="18" cy="18" r="17" fill="#dfe2e4" /><circle cx="18" cy="18" r="15.300" fill="url(#sf)" /><circle cx="18" cy="18" r="13" fill="none" stroke="#9cd8ff" strokeWidth="1.500" strokeDasharray=".6 1.500" /><path d="M29 7L16 16l4 4z" fill="#f3343a" /><path d="M7 29l13-9-4-4z" fill="#f4f4f4" /></g>);
    case "mail":
      return (<g><g transform="rotate(-6 17 18)"><path d="M5 3h25v31H5z" fill="#fff" stroke="#ddd" strokeDasharray="2 1" strokeWidth="1.500" /><path d="M7 5h21v26H7z" fill="url(#ml)" /></g><path d="M8 8q1 8 6 11-2 3-3 5 4-1 6 0 4 4 12 4-1-5-9-7-1-3-4-4-2-6-8-9z" fill="#59402c" /><path d="M18 21l-7 4 4 1z" fill="#f7ead5" /><circle cx="26" cy="28" r="7" fill="none" stroke="#8e98a3" /><circle cx="26" cy="28" r="4" fill="#72849e" opacity=".6" /></g>);
    case "contacts":
      return (<g><path d="M27 11h4v6h-4z" fill="#35b4e8" /><path d="M27 17h4v6h-4z" fill="#4ccb5b" /><path d="M27 24h5v6h-5z" fill="#f2932f" /><path d="M3 5l22-4q3 0 4 3v26q0 2-2 2L8 36q-3 0-3-3z" fill="#b5833f" /><path d="M3 5l4-1 2 31-4 1z" fill="#8e6127" /><circle cx="18" cy="18" r="7.500" fill="#a67635" stroke="#835a24" /><circle cx="18" cy="16" r="2.500" fill="#7b5424" /><path d="M13 23q0-4 5-4t5 4q-5 3-10 0z" fill="#7b5424" /></g>);
    case "calendar":
      return (<g transform="rotate(-4 18 18)"><rect x="4" y="4" width="31" height="31" rx="2" fill="#777d83" /><rect x="4" y="2" width="28" height="30" rx="2" fill="#fafafa" /><path d="M6 2h24q2 0 2 2v7H4V4q0-2 2-2z" fill="#ee4035" /><text x="18" y="9" fill="#fff" fontSize="6.500" textAnchor="middle">OCT</text><text x="18" y="28" fill="#333" fontSize="18" textAnchor="middle">25</text></g>);
    case "notes":
      return (<g transform="rotate(-5 18 18)"><path d="M4 3h27v31H4z" fill="#fdfbf0" stroke="#d9d5c6" strokeWidth=".5" /><path d="M4 2h27v7H4z" fill="#fcd426" /><path d="M6 13h23M6 16.500h23M6 20h23M6 23.500h23M6 27h23M6 30.500h23" stroke="#dedac8" /></g>);
    case "reminders":
      return (<g transform="rotate(-6 18 18)"><rect x="5" y="3" width="28" height="33" rx="2" fill="#6a6d70" /><rect x="4" y="2" width="27" height="32" rx="2" fill="#fbfbfb" /><circle cx="9" cy="10" r="2.300" fill="#f7931e" /><circle cx="9" cy="16.500" r="2.300" fill="#2f8fe8" /><circle cx="9" cy="23" r="2.300" fill="#27c43b" /><circle cx="9" cy="29" r="2.300" fill="#c66ce5" /><path d="M12 6h17M12 13h17M12 19.500h17M12 26h17M12 31h17" stroke="#ddd" /></g>);
    case "maps":
      return (<g><g transform="rotate(-6 18 18)"><path d="M2 5h28v29H2z" fill="#f6f1de" /><path d="M2 5h17v4H2zM13 5h8v6h-8z" fill="#6dd072" /><path d="M22 5h8v3h-8z" fill="#f49cc0" /><path d="M2 10h22v4H8v6H5v-6H2z" fill="#459de0" /><path d="M5 34V22l14-9 5 6v8z" fill="#e8f0d8" stroke="#f8c836" strokeWidth="2" /><path d="M8 17h9v5q-4 5-9 0z" fill="#4b74c5" /><path d="M8 17h9v2H8z" fill="#e24c4c" /></g><circle cx="28" cy="26" r="8" fill="#f6f6f6" stroke="#bcc2c9" /><circle cx="28" cy="26" r="5.500" fill="none" stroke="#4e91c4" strokeDasharray="2 1" /><text x="28" y="28" fontSize="5.500" fill="#444" textAnchor="middle">3D</text><path d="M26.500 20l1.500-2.500 1.500 2.500z" fill="#e33" /></g>);
    case "photos":
      return (<g><circle cx="18" cy="18" r="17" fill="#f5f5f4" stroke="#d0d0d0" strokeWidth=".6" /><g className="isolate">{PETALS.map((c, i) => (<ellipse key={c} cx="18" cy="10.500" rx="5" ry="7.300" fill={c} className="mix-blend-multiply" transform={`rotate(${i * 45} 18 18)`} />))}</g></g>);
    case "messages":
      return (<g><path d="M17 3c10 0 17 5 17 13s-7 13-17 13l-4-.5q-3 4-8 4 3-3 2-6-6-3-7-10C0 8 7 3 17 3z" fill="url(#ms)" /><path d="M24 17c7 0 11 3 11 8 0 3-2 5-4 6l1 4-5-3c-8 1-14-1-14-7 0-5 5-8 11-8z" fill="#e7f1fb" /><g fill="#14467e"><circle cx="19" cy="25" r="1.600" /><circle cx="24" cy="25" r="1.600" /><circle cx="29" cy="25" r="1.600" /></g></g>);
    case "facetime":
      return (<g><rect x="1" y="3" width="32" height="28" rx="4" fill="url(#ft)" /><rect x="5" y="11" width="15" height="13" rx="2" fill="#fff" /><path d="M20 16l7-5v13l-7-5z" fill="#fff" /><circle cx="27" cy="25" r="8.500" fill="#fafafa" stroke="#ccc" strokeWidth=".5" /><path d="M23 20q-2 2 2 6t6 3l1-2-3-2-1 1q-2-1-3-3l1-1-1-3z" fill="#22c543" /></g>);
    case "itunes":
      return (<g><circle cx="18" cy="18" r="16.500" fill="#fbfbfb" stroke="url(#it)" strokeWidth="2" /><path d="M14 10l11-3v15.500" fill="none" stroke="url(#it)" strokeWidth="2" /><path d="M14 10l11-3v4l-11 3zM13 10h2v15h-2z" fill="#dd46b2" /><ellipse cx="12" cy="25" rx="3.500" ry="2.800" fill="#6b60e2" /><ellipse cx="22.500" cy="22.500" rx="3.500" ry="2.800" fill="#9c52d8" /></g>);
    case "ibooks":
      return (<g><circle cx="18" cy="18" r="17" fill="#e5dfd9" /><circle cx="18" cy="18" r="15.500" fill="url(#ib)" /><path d="M7 11q7-3 10.500 1v14Q13 22 7 25zM29 11q-7-3-10.500 1v14Q23 22 29 25z" fill="#fff" /></g>);
    case "appstore":
      return (<g><circle cx="18" cy="18" r="17" fill="#dce5ed" /><circle cx="18" cy="18" r="15.500" fill="url(#ms)" /><path d="M19.500 8L10 26M16.500 8L26 26M7 21.500h22" stroke="#fff" strokeWidth="2.300" fill="none" strokeLinecap="round" /></g>);
    case "prefs":
      return (<g><rect x="1" y="2" width="34" height="33" rx="2" fill="url(#sp)" /><circle cx="18" cy="18.500" r="14" fill="#2c2e30" /><circle cx="18" cy="18.500" r="11.500" fill="none" stroke="#b9bcbe" strokeWidth="3" strokeDasharray="1.500 1" /><circle cx="18" cy="18.500" r="9.500" fill="none" stroke="#a3a7aa" strokeWidth="2" /><path d="M18 9v19M10 14l16 9M26 14l-16 9" stroke="#a3a7aa" strokeWidth="1.700" /><circle cx="18" cy="18.500" r="4" fill="#55595c" stroke="#c2c5c7" /></g>);
    case "xcode":
      return (<g><path d="M1 8l30-5 4 28-29 5z" fill="url(#ms)" stroke="#83caff" strokeWidth=".8" /><path d="M9 31l9-18M16 11l11 19M7 26l23-3" stroke="#a5dcff" strokeWidth="1.500" fill="none" /><path d="M20 33l9-27h4l-9 28q-2 2-4-1z" fill="#24272a" /><path d="M21 3q5-4 12 0l5 2-1 4-4-3-9 1z" fill="#e4e8ea" stroke="#798187" strokeWidth=".5" /></g>);
    case "matlab":
      return (<g><path d="M-1 22l11-5 5 6-6 6z" fill="#3e83c5" /><path d="M10 17l8-7 7-8q4 8 12 29-5-4-9-3l-9 8q-2-8-6-8z" fill="url(#mt)" /><path d="M10 17l8-7 6-8-9 27-6 1 6-7z" fill="#732b20" opacity=".65" /></g>);
    case "circuit":
      return (<g transform="rotate(-8 18 18)"><path d="M1 4h34v30H1z" fill="#1b71b8" stroke="#79b8e5" strokeWidth=".7" /><circle cx="11" cy="20" r="7" fill="none" stroke="#e4f3fc" strokeWidth="1.400" /><path d="M7 20q2-6 4 0t4 0M11 13V9h8M11 27v3h8" stroke="#e4f3fc" fill="none" strokeWidth="1.300" /><path d="M23 9h6v3l3 2-6 2 6 2-6 2 6 2-3 2v4h-7" stroke="#e4f3fc" fill="none" strokeWidth="1.300" /></g>);
    case "ribbon":
      return (<g><path d="M18 0l19 18-18 19L0 17z" fill="#0aa0d4" /><path d="M18 0l19 18H0z" fill="#28cfe0" opacity=".7" /><path d="M19 37L37 18l-15 3z" fill="#05517a" /><path d="M1 10q7-4 8 1-3 19 3 19 6-1 6-17-3-5 2-6 2 1 1 6 0 15 5 15 6-3 4-20" fill="none" stroke="#f2aa0c" strokeWidth="4.500" strokeLinecap="round" strokeLinejoin="round" /><path d="M3 9q4-3 5 2-3 18 4 18 5-2 5-16-2-5 2-5 1 1 1 5 1 15 6 14 5-4 3-18" fill="none" stroke="#ffe13a" strokeWidth="1.300" /></g>);
    case "term":
      return (<g><rect x="1" y="4" width="34" height="30" rx="1.500" fill="#1e1e1e" stroke="#9ba6a8" strokeWidth="1.500" /><text x="4" y="14" fontFamily="Liberation Mono, monospace" fontSize="9" fontWeight="bold" fill="#fff">&gt;_</text></g>);
    case "exec":
      return (<g><rect x="1" y="4" width="34" height="30" rx="1.500" fill="#242424" stroke="#9ba6a8" strokeWidth="1.500" /><text x="4" y="12.500" fontFamily="Liberation Mono, monospace" fontSize="6" fontWeight="bold" fill="#21bd49">exec</text></g>);
    case "xquartz":
      return (<g><ellipse cx="18" cy="21" rx="16" ry="11" fill="none" stroke="#f5661b" strokeWidth="2.500" /><path d="M3 4h10l19 30H22z" fill="#161616" /><path d="M31 4l-4 0L3 34h3z" fill="#222" /><path d="M18 32q16-1 16-11-1-6-7-9" fill="none" stroke="#ffa64b" strokeWidth="2" /></g>);
    case "grapher":
      return (<g><path d="M0 9L19 0l18 9v17L19 37 0 27z" fill="#f2f5f6" stroke="#c4d3da" /><path d="M19 0v20L0 27M19 20l18 6M5 7v17M10 5v17M14 3v18M24 3v18M29 6v18M33 8v17" stroke="#b6d9e5" strokeWidth=".6" fill="none" /><path d="M5 8q7-6 14-3 5 2 6 13 2 9 8 8l-10 6q-8-1-10-14Q12 7 5 8z" fill="url(#gr)" /></g>);
    case "vpn":
      return (<g><circle cx="20" cy="18" r="17" fill="#dae5e9" /><path d="M4 12Q15 3 23 12t13 9" stroke="#4d9d5b" strokeWidth="5" fill="none" /><path d="M24 4q-10 9-2 18 5 8 12 4" stroke="#159eb7" strokeWidth="4.500" fill="none" /><path d="M14 18q5-7 12 3" stroke="#226088" strokeWidth="4" fill="none" /><circle cx="10" cy="28" r="9" fill="#d59a3d" stroke="#fff" strokeWidth="1.200" /><rect x="6.500" y="27" width="7.500" height="6" fill="#fff" /><path d="M8 27v-2a2.200 2.200 0 014.500 0v2" stroke="#fff" fill="none" strokeWidth="1.300" /></g>);
    case "acrobat":
      return (<g><rect x="1" y="2" width="34" height="32" fill="#2e0b0b" stroke="#ee2429" strokeWidth="2" /><path d="M8 28q-2-3 8-6t13 1q0 3-6-1T16 10q0-4 2-2 2 4-3 13T8 28z" fill="none" stroke="#f0e7e7" strokeWidth="1.300" /></g>);
    case "word":
      return (<g><path d="M19 6h16v27H19z" fill="#f9f9f9" stroke="#bec7d2" strokeWidth=".5" /><path d="M22 11h11M22 15h11M22 19h11M22 23h11M22 27h11" stroke="#2c599f" strokeWidth="1.700" /><path d="M1 6l20-4v32L1 31z" fill="#2a5cab" /><text x="10.500" y="23.500" fontSize="14" fontWeight="bold" fill="#fff" textAnchor="middle">W</text></g>);
    case "quicktime":
      return (<g><circle cx="18" cy="18" r="17" fill="#46545e" /><circle cx="17.500" cy="17.500" r="12" fill="url(#qt)" /><circle cx="17.500" cy="17.500" r="7" fill="#38b7ff" /><path d="M17 17l9 1 9 14v4h-8z" fill="#46545e" /><path d="M17 17l9 1 9 14" fill="none" stroke="#6f7f8a" /></g>);
    case "window":
      return (<g><path d="M-1 7h38v23H-1z" fill="#f1f1f1" /><path d="M0 11h36M8 13h5M14 13h20M8 16h8M18 16h16M8 19h7M18 19h16M8 22h8M18 22h16M8 25h9" stroke="#b2b5b6" strokeWidth=".8" /><path d="M1 13h5v10H1z" fill="#dce1e5" /><path d="M24 25h12v11H24z" fill="#e4f1fb" /><path d="M24 25h7q-2 4-1 6l2 1v4h-8z" fill="#1788ea" /></g>);
    case "trash":
      return (<g><path d="M4 5h28l-4 29q-10 3-20 0z" fill="#dcdcda" /><path d="M8 9l3 24M28 9l-3 24M7 14l20 12M29 14L9 29" stroke="#cacac8" /><ellipse cx="18" cy="5" rx="14" ry="4.500" fill="#eee" stroke="#bcbcbc" /><path d="M7 4l4-3 4 4 4-4 4 3 4-2 4 4-5 2-14 1z" fill="#a0a4a4" /><path d="M10 4l3 1-2 2zM20 2l4 3-5 1zM15 5l3 2h-4z" fill="#34454b" /><path d="M24 4l3 1-1 2z" fill="#9d523e" /></g>);
    default:
      return null;
  }
}

function DockItem({ id, dot, badge }: { id: string; dot?: string; badge?: string }) {
  return (
    <div className="relative flex h-[51px] w-[42.5px] shrink-0 flex-col items-center pt-[6px]">
      <svg width="36" height="37" viewBox="0 0 36 37" overflow="visible" fontFamily="Liberation Sans, sans-serif">
        <DockArt id={id} />
      </svg>
      {dot && <div className={`mt-[2px] h-1 w-1 rounded-full ${dot}`} />}
      {badge && (
        <div className="absolute top-1 right-0 h-[15px] w-[15px] rounded-full bg-[#f3191f] text-center text-[9px] leading-[15px] text-white">{badge}</div>
      )}
    </div>
  );
}

function Grad({ id, stops, d = false }: { id: string; stops: string[]; d?: boolean }) {
  return (
    <linearGradient id={id} x1="0" y1="0" x2={d ? "1" : "0"} y2="1">
      {stops.map((c, i) => (<stop key={i} offset={i / (stops.length - 1)} stopColor={c} />))}
    </linearGradient>
  );
}

function Dock() {
  const light = "bg-[#555]";
  const dark = "bg-black";
  return (
    <div className="flex h-[52px] border-t border-[#161616] bg-[#111c20]">
      <svg width="0" height="0" className="absolute">
        <defs>
          <Grad id="fb" stops={["#13c7fb", "#0879f2"]} />
          <Grad id="lp" stops={["#b7c1c3", "#737a7d"]} />
          <Grad id="sf" stops={["#22c7fa", "#1461db"]} />
          <Grad id="ml" stops={["#1975cf", "#8fccf4"]} />
          <Grad id="ms" stops={["#16b1fa", "#096ce9"]} />
          <Grad id="ft" stops={["#68f36b", "#07bd31"]} />
          <Grad id="it" stops={["#f44375", "#bb4edb", "#35bbfa"]} />
          <Grad id="ib" stops={["#fba51c", "#f2520b"]} />
          <Grad id="sp" stops={["#b7c6cd", "#656e73"]} />
          <Grad id="mt" stops={["#db3114", "#f58d1c", "#b52710"]} d />
          <Grad id="gr" stops={["#d7f536", "#fbda13", "#ff482c", "#f20fd5"]} />
          <Grad id="qt" stops={["#17b7ff", "#0b42de"]} />
        </defs>
      </svg>
      <div className="flex w-8 shrink-0">
        <div className="w-[5px] bg-[#0b1717]" />
        <div className="w-1 border-x border-[#777] bg-[#ddd]" />
        <div className="w-[5px] border-r border-[#777] bg-[#bbb]" />
        <div className="w-[13px] bg-gradient-to-b from-[#777] to-[#aaa]" />
        <div className="w-px bg-black" />
        <div className="w-1 bg-[#d8d8d8]" />
      </div>
      <div className="flex w-[1301px] shrink-0 rounded-t-[5px] bg-[linear-gradient(90deg,#d0ced1_0%,#d9d5da_35%,#d7d3d7_48%,#8c9996_53%,#536e6a_57%,#4a6865_75%,#566a6b_100%)] pl-[3.5px]">
        <DockItem id="finder" dot={light} />
        <DockItem id="launchpad" />
        <DockItem id="safari" dot={light} />
        <DockItem id="mail" />
        <DockItem id="contacts" />
        <DockItem id="calendar" />
        <DockItem id="notes" />
        <DockItem id="reminders" />
        <DockItem id="maps" />
        <DockItem id="photos" />
        <DockItem id="messages" dot={light} badge="1" />
        <DockItem id="facetime" />
        <DockItem id="itunes" />
        <DockItem id="ibooks" />
        <DockItem id="appstore" badge="3" />
        <DockItem id="prefs" />
        <DockItem id="xcode" />
        <DockItem id="matlab" />
        <DockItem id="circuit" />
        <DockItem id="ribbon" dot={dark} />
        <DockItem id="term" dot={dark} />
        <DockItem id="xquartz" dot={dark} />
        <DockItem id="exec" />
        <DockItem id="grapher" />
        <DockItem id="vpn" dot={dark} />
        <DockItem id="acrobat" dot={dark} />
        <DockItem id="word" dot={dark} />
        <DockItem id="quicktime" dot={dark} />
        <div className="mx-[9.5px] mt-2 h-9 w-px bg-[#344b4b]" />
        <DockItem id="window" />
        <DockItem id="trash" />
      </div>
    </div>
  );
}

export default function App() {
  return (
    <div className="flex h-[768px] w-[1366px] flex-col overflow-hidden bg-[#c0c0c0] font-['Liberation_Sans',sans-serif] text-black">
      <div className="shrink-0 font-['Inter',sans-serif]">
        <MacBar />
        <TitleBar />
      </div>
      <AppMenu />
      <div className="h-px bg-[#808080]" />
      <ToolbarOne />
      <ToolbarTwo />
      <div className="h-[5px] shrink-0 bg-[#000080]" />
      <div className="h-px shrink-0 bg-[#d8d8d8]" />
      <div className="flex h-[542px] shrink-0">
        <LeftPanel />
        <div className="flex w-[7px] shrink-0 border-l border-[#808080]">
          <div className="w-px bg-white" />
          <div className="w-[3px] bg-[#c0c0c0]" />
          <div className="w-px bg-[#808080]" />
          <div className="w-px bg-black" />
        </div>
        <WavePanel />
      </div>
      <div className="flex h-[27px] shrink-0 border-t border-[#808080]">
        <div className="ml-0.5 flex w-[87px] items-center border border-t-0 border-r-2 border-b-2 border-r-black border-b-black border-l-white pl-1 text-[12px] tracking-[0.35px]">
          <WaveIcon />
          <span className="mr-1 ml-1.5">Wave.1</span>
          <svg width="8" height="8"><path d="M.5.5l7 7M7.500.5l-7 7" stroke="#606060" strokeWidth="1.300" /></svg>
        </div>
      </div>
      <StatusBar />
      <Dock />
    </div>
  );
}
